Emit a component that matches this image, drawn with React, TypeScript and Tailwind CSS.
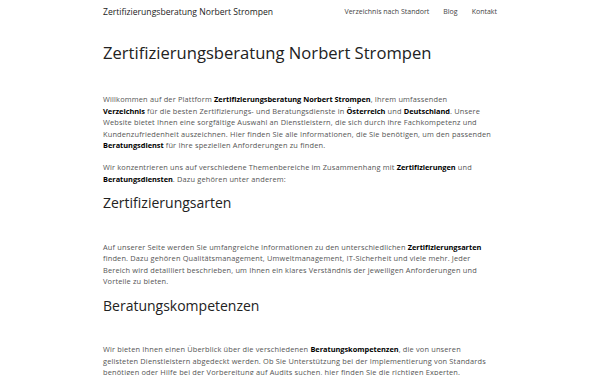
const B = ({ children }: { children: React.ReactNode }) => (
  <b className="font-bold tracking-[-0.02px] text-black">{children}</b>
);

export default function App() {
  return (
    <div className="min-h-screen bg-white text-[#555] font-['Open_Sans',sans-serif]">
      {/* header */}
      <header className="mx-auto flex h-[25px] w-[394px] items-center justify-between">
        <a className="text-[8.6px] text-[#222]">Zertifizierungsberatung Norbert Strompen</a>
        <nav className="flex gap-[14px] text-[7px] text-[#444]">
          <a>Verzeichnis nach Standort</a>
          <a>Blog</a>
          <a>Kontakt</a>
        </nav>
      </header>

      <main className="mx-auto w-[394px]">
        <h1 className="mt-[16px] text-[16.6px] leading-[24px] text-[#222]">
          Zertifizierungsberatung Norbert Strompen
        </h1>

        <div className="mt-[29px] mr-[-8px] text-[7.4px] leading-[11.6px] tracking-[0.17px]">
          <p>
            Willkommen auf der Plattform <B>Zertifizierungsberatung Norbert Strompen</B>, Ihrem umfassenden
            <br />
            <B>Verzeichnis</B> für die besten Zertifizierungs- und Beratungsdienste in <B>Österreich</B> und{" "}
            <B>Deutschland</B>. Unsere
            <br />
            Website bietet Ihnen eine sorgfältige Auswahl an Dienstleistern, die sich durch ihre Fachkompetenz und
            <br />
            Kundenzufriedenheit auszeichnen. Hier finden Sie alle Informationen, die Sie benötigen, um den passenden
            <br />
            <B>Beratungsdienst</B> für Ihre speziellen Anforderungen zu finden.
          </p>
          <p className="mt-[10.5px]">
            Wir konzentrieren uns auf verschiedene Themenbereiche im Zusammenhang mit <B>Zertifizierungen</B> und
            <br />
            <B>Beratungsdiensten</B>. Dazu gehören unter anderem:
          </p>
        </div>

        <h2 className="mt-[7px] text-[14px] leading-[20px] text-[#222]">Zertifizierungsarten</h2>

        <p className="mt-[29px] mr-[-8px] text-[7.4px] leading-[11.6px] tracking-[0.17px]">
          Auf unserer Seite werden Sie umfangreiche Informationen zu den unterschiedlichen <B>Zertifizierungsarten</B>
          <br />
          finden. Dazu gehören Qualitätsmanagement, Umweltmanagement, IT-Sicherheit und viele mehr. Jeder
          <br />
          Bereich wird detailliert beschrieben, um Ihnen ein klares Verständnis der jeweiligen Anforderungen und
          <br />
          Vorteile zu bieten.
        </p>

        <h2 className="mt-[8px] text-[14px] leading-[20px] text-[#222]">Beratungskompetenzen</h2>

        <p className="mt-[28px] mr-[-8px] text-[7.4px] leading-[11.6px] tracking-[0.17px]">
          Wir bieten Ihnen einen Überblick über die verschiedenen <B>Beratungskompetenzen</B>, die von unseren
          <br />
          gelisteten Dienstleistern abgedeckt werden. Ob Sie Unterstützung bei der Implementierung von Standards
          <br />
          benötigen oder Hilfe bei der Vorbereitung auf Audits suchen, hier finden Sie die richtigen Experten.
        </p>
      </main>
    </div>
  );
}
